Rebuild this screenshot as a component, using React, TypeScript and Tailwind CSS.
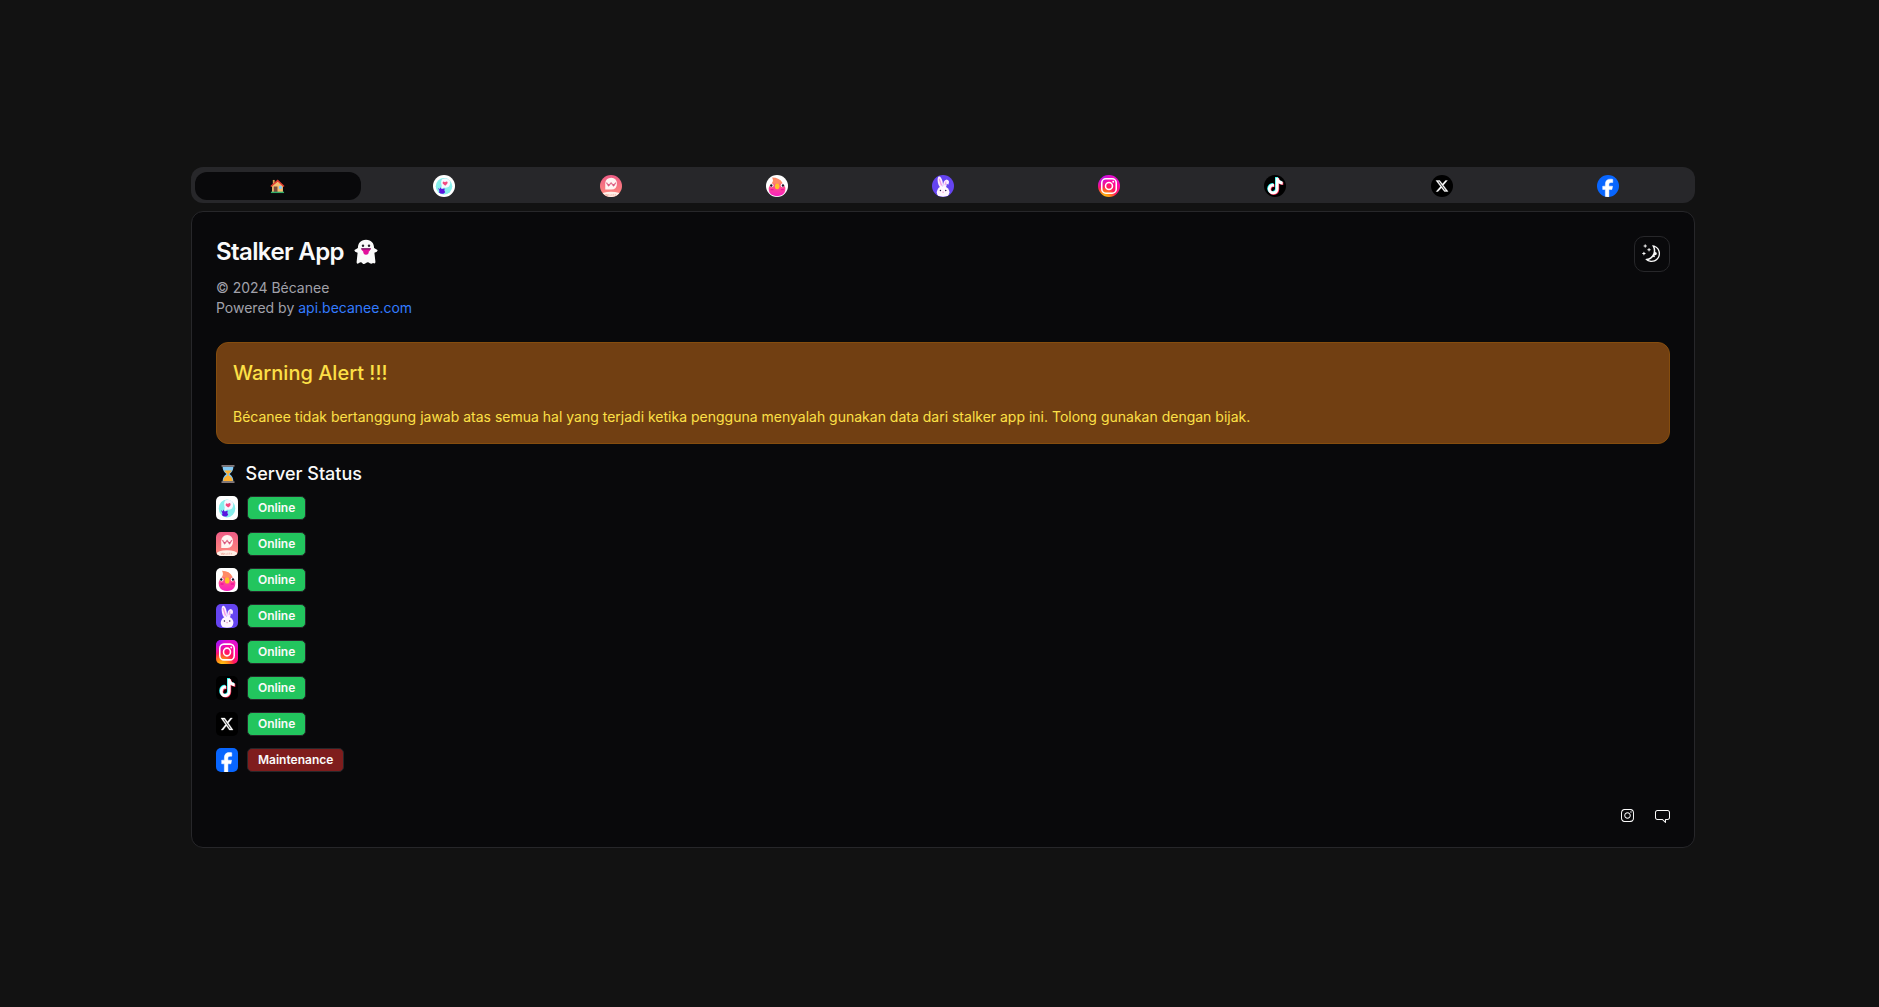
import React from "react";
import { RxMoon, RxInstagramLogo, RxChatBubble } from "react-icons/rx";
import { FaTiktok, FaXTwitter } from "react-icons/fa6";

type ArtProps = { id: string };

function NglLike() {
  return (
    <>
      <rect width="24" height="24" fill="#fff" />
      <circle cx="12" cy="12.4" r="9" fill="#86efec" />
      <path d="M10 4.6Q14 2.7 17.8 5.5Q20 9 17.5 12.5Q14 14.5 12 13.5L9 15.5L9.5 11.5Q8 7 10 4.6Z" fill="#f6f7ff" />
      <path d="M13.3 11.6L10.6 9.4Q10.2 7.4 11.6 7.2L13.1 8Q14.4 6.3 15.7 7.4Q16.8 9.3 13.3 11.6Z" fill="#f24a80" />
      <path d="M5.5 14L7.5 15.5L8 13.4L9.5 15.4L12.8 14.7L12.4 17L13.3 18.8L11.8 20.3Q8.8 21 6.5 19.2L7 17.4Z" fill="#5b16df" />
    </>
  );
}

function Whisper({ id }: ArtProps) {
  return (
    <>
      <defs>
        <linearGradient id={id} x2="0" y2="1">
          <stop stopColor="#ee5c85" />
          <stop offset="1" stopColor="#ff8d7d" />
        </linearGradient>
      </defs>
      <rect width="24" height="24" fill={`url(#${id})`} />
      <path d="M5.7 15.9V9.3Q6 3.2 12.3 3Q18.1 3.3 18.5 9.2Q18.5 15.6 12.3 15.9Z" fill="#fff4f2" />
      <path d="M7 8.2L9.4 11.6L12.1 8.6L14.8 11.6L17.3 8.2" fill="none" stroke="#e2708f" strokeWidth="1.4" />
      <path d="M8.6 10.8h1.6m3.8 0h1.6" stroke="#d64d78" strokeWidth="1.6" />
      <ellipse cx="12" cy="21.8" rx="11.5" ry="3.6" fill="#fff0e8" />
      <path d="M5.5 20.8l1 2 1-2 1 2 1-1.7m1.5.2v1.7m2-2.2v2m2-2.2v2m2-1.7v1.5" stroke="#ed9c90" fill="none" strokeWidth=".7" />
    </>
  );
}

function Bird({ id }: ArtProps) {
  return (
    <>
      <defs>
        <linearGradient id={id} x2="0" y2="1">
          <stop stopColor="#ff7a70" />
          <stop offset=".4" stopColor="#ff4a93" />
          <stop offset="1" stopColor="#fb1fc0" />
        </linearGradient>
      </defs>
      <rect width="24" height="24" fill="#fff" />
      <path d="M3 14Q5 7.5 12 7.3Q19.2 7.5 21.1 14Q21.5 19.2 17.5 21.8Q12 24.3 6.5 21.8Q2.4 19 3 14Z" fill={`url(#${id})`} />
      <path d="M6.6 2.8Q15 2.8 18 8.8L15.5 9.6H9.2L6.5 8.6Q8.6 6.5 6.6 2.8Z" fill="#ff8a66" />
      <circle cx="6.2" cy="11.4" r="2" fill="#fff" />
      <circle cx="18" cy="11.4" r="2" fill="#fff" />
      <circle cx="5.8" cy="11.5" r="1.3" fill="#21122b" />
      <circle cx="18.5" cy="11.5" r="1.3" fill="#21122b" />
      <ellipse cx="12.2" cy="12.4" rx="2.5" ry="3.2" fill="#ffc229" />
      <path d="M5 16h3.2m8-.1h3.3" stroke="#f0129a" strokeWidth="1.5" />
    </>
  );
}

function Bunny() {
  return (
    <>
      <rect width="24" height="24" fill="#6544f0" />
      <ellipse cx="9" cy="7.8" rx="2.6" ry="6.2" transform="rotate(-13 9 7.8)" fill="#fff0ff" />
      <path d="M12 13Q12 5.5 16 5Q20.1 6 17.7 10.6L16 9.2Q16.4 11.5 14.7 14Z" fill="#faedff" />
      <path d="M8 4.5L10.2 11" stroke="#f09ae6" strokeWidth="1.5" strokeLinecap="round" />
      <path d="M15.3 7.2L14.2 11" stroke="#f09ae6" strokeWidth="1.1" />
      <path d="M7 23Q4 20 6 16Q8 12.4 12 12.4Q16.3 12.6 18.3 16Q20.2 20 17 23Q12 24.4 7 23Z" fill="#fff7ff" />
      <circle cx="9.2" cy="17" r=".8" fill="#291349" />
      <circle cx="15" cy="17" r=".8" fill="#291349" />
      <path d="M11.1 18.3h2l-1 1.2Z" fill="#ec77bd" />
    </>
  );
}

function Instagram({ id }: ArtProps) {
  return (
    <>
      <defs>
        <radialGradient id={id} cx=".28" cy="1.08" r="1.12">
          <stop stopColor="#ffdd16" />
          <stop offset=".26" stopColor="#ff8b13" />
          <stop offset=".5" stopColor="#ff185e" />
          <stop offset=".8" stopColor="#ff06a8" />
          <stop offset="1" stopColor="#e010d0" />
        </radialGradient>
        <radialGradient id={`${id}-corner`} cx="0" cy="0" r=".65">
          <stop stopColor="#7a1cff" />
          <stop offset="1" stopColor="#d010ff" stopOpacity="0" />
        </radialGradient>
      </defs>
      <rect width="24" height="24" fill={`url(#${id})`} />
      <rect width="24" height="24" fill={`url(#${id}-corner)`} />
      <rect x="4.1" y="4.1" width="15.8" height="15.8" rx="4.5" fill="none" stroke="#fff" strokeWidth="1.7" />
      <circle cx="12" cy="12" r="3.8" fill="none" stroke="#fff" strokeWidth="1.7" />
      <circle cx="16.6" cy="7.4" r="1" fill="#fff" />
    </>
  );
}

function Tiktok() {
  return (
    <>
      <rect width="24" height="24" fill="#000" />
      <FaTiktok x="2.3" y="2.1" size={18.5} color="#25f4ee" />
      <FaTiktok x="3.7" y="3.3" size={18.5} color="#fe2c55" />
      <FaTiktok x="3" y="2.7" size={18.5} color="#fff" />
    </>
  );
}

function XLogo() {
  return (
    <>
      <rect width="24" height="24" fill="#000" />
      <FaXTwitter x="4.6" y="4.6" size={14.8} color="#fff" stroke="#fff" strokeWidth="12" />
    </>
  );
}

function Facebook() {
  return (
    <>
      <rect width="24" height="24" fill="#0866ff" />
      <path d="M9.1 24v-8.2H6.2v-3.6h2.9v-2.1c0-3.8 1.9-5.6 5.4-5.6 1 0 2.1.1 2.7.3v3.4h-1.8c-1.8 0-2.4.8-2.4 2.4v1.6h4l-.7 3.6H13V24Z" fill="#fff" stroke="#fff" strokeWidth=".5" />
    </>
  );
}

const services: { name: string; Art: React.ComponentType<ArtProps>; online: boolean }[] = [
  { name: "ngl", Art: NglLike, online: true },
  { name: "whisper", Art: Whisper, online: true },
  { name: "bird", Art: Bird, online: true },
  { name: "bunny", Art: Bunny, online: true },
  { name: "instagram", Art: Instagram, online: true },
  { name: "tiktok", Art: Tiktok, online: true },
  { name: "x", Art: XLogo, online: true },
  { name: "facebook", Art: Facebook, online: false },
];

function House() {
  return (
    <svg viewBox="0 0 16 16" className="mr-px size-[15px]">
      <path d="M3 1h2v5H3z" fill="#dca35a" />
      <path d="M2.2 7.2L8.3 2L13.8 7.2V14H2.2Z" fill="#f5bd70" />
      <path d="M.9 8L8.2 1.7L15 8" fill="none" stroke="#e33d33" strokeWidth="1.6" />
      <path d="M4 8h4v6H4z" fill="#7b4b3a" />
      <path d="M9.5 7.5h3v3h-3z" fill="#7ecbff" />
      <path d="M1 13.5h14V15H1z" fill="#32ae6a" />
    </svg>
  );
}

function Ghost() {
  return (
    <svg viewBox="0 0 24 26" className="h-[26px] w-6">
      <path d="M12 .8C6.5.8 4 4.4 3.9 9L.5 11Q0 13 3.6 13.7L2.6 23.2Q2.7 25.6 5 24Q7 22.5 8.6 24.4Q10 25.6 12 24Q14 22.6 15.8 24.3Q17.4 25.4 19 24Q21.6 25.2 21.4 22.6L20.4 13.7Q24 13 23.5 11L20.1 9C20 4.4 17.5.8 12 .8Z" fill="#fafafa" />
      <circle cx="9" cy="6.8" r="1.2" fill="#25222a" />
      <circle cx="15" cy="6.8" r="1.2" fill="#25222a" />
      <path d="M7.1 9.5H16.9Q15.9 12 14.8 12.5Q14.8 15.8 12 15.8Q9.4 15.8 9.2 12.5Q7.6 11.6 7.1 9.5Z" fill="#e2109c" />
      <path d="M7.1 9.2H16.9L16.4 10.4H7.6Z" fill="#6a175c" />
    </svg>
  );
}

function Hourglass() {
  return (
    <svg viewBox="0 0 14 18" className="h-[18px] w-[14px]">
      <path d="M1.6 1.5H12.4Q12.4 6.3 8.6 9Q12.4 11.7 12.4 16.5H1.6Q1.6 11.7 5.4 9Q1.6 6.3 1.6 1.5Z" fill="#83c9f5" />
      <path d="M3.2 5.5H10.8Q9.8 7.6 7.6 8.7V10.5Q11.6 12.4 11.8 16.2H2.2Q2.4 12.4 6.4 10.5V8.7Q4.2 7.6 3.2 5.5Z" fill="#ffb02e" />
      <path d="M.5 0h13v1.8H.5zM.5 16.2h13V18H.5z" fill="#83787a" />
    </svg>
  );
}

export default function App() {
  return (
    <div className="flex min-h-screen flex-col bg-[#121212] pt-[167px] pl-[191px] font-['Inter',sans-serif] text-[#fafafa]">
      <main className="w-[1504px]">
        <nav className="grid h-9 grid-cols-9 items-center rounded-xl bg-[#27272a] px-1 pt-[5px] pb-[3px]">
          <button className="flex h-7 items-center justify-center rounded-xl bg-[#09090b]">
            <House />
          </button>
          {services.map(({ name, Art }) => (
            <button key={name} className="flex h-7 items-center justify-center">
              <svg viewBox="0 0 24 24" className="size-[22px] rounded-full">
                <Art id={`tab-${name}`} />
              </svg>
            </button>
          ))}
        </nav>

        <section className="mt-2 h-[637px] rounded-xl border border-[#27272a] bg-[#09090b] p-6">
          <header className="flex items-start justify-between">
            <div>
              <h1 className="flex h-8 items-center gap-2.5 text-2xl font-semibold tracking-tight">
                Stalker App <Ghost />
              </h1>
              <p className="mt-2.5 text-sm leading-5 text-[#a1a1aa]">
                © 2024 Bécanee
                <br />
                Powered by <span className="text-[#337bff]">api.becanee.com</span>
              </p>
            </div>
            <button className="flex size-9 items-center justify-center rounded-[10px] border border-[#27272a]">
              <RxMoon className="size-[19.2px]" />
            </button>
          </header>

          <div className="mt-6 h-[102px] rounded-xl border border-[#854d0e] bg-[#713f12] px-4 pt-4 text-[#fde047]">
            <h2 className="text-xl leading-7 font-medium tracking-normal">Warning Alert !!!</h2>
            <p className="mt-[19px] text-sm leading-[22px]">
              Bécanee tidak bertanggung jawab atas semua hal yang terjadi ketika pengguna menyalah gunakan data dari stalker app ini. Tolong gunakan dengan bijak.
            </p>
          </div>

          <h2 className="mt-4 flex h-7 items-center gap-[10.5px] pl-[5px] text-lg font-medium">
            <Hourglass /> Server Status
          </h2>
          <ul className="mt-2 flex flex-col gap-3">
            {services.map(({ name, Art, online }) => (
              <li key={name} className="flex h-6 items-center gap-[9px]">
                <svg viewBox="0 0 24 24" preserveAspectRatio="none" className="h-6 w-[22px] rounded-[5px]">
                  <Art id={`row-${name}`} />
                </svg>
                <span
                  className={
                    "flex h-6 items-center rounded-[5px] border border-[#27272a] px-2.5 text-xs font-semibold " +
                    (online ? "bg-[#22c55e]" : "bg-[#7f1d1d]")
                  }
                >
                  {online ? "Online" : "Maintenance"}
                </span>
              </li>
            ))}
          </ul>
          <footer className="mt-9 flex justify-end gap-5">
            <RxInstagramLogo className="size-[15px]" />
            <RxChatBubble className="size-[15px]" />
          </footer>
        </section>
      </main>
    </div>
  );
}
